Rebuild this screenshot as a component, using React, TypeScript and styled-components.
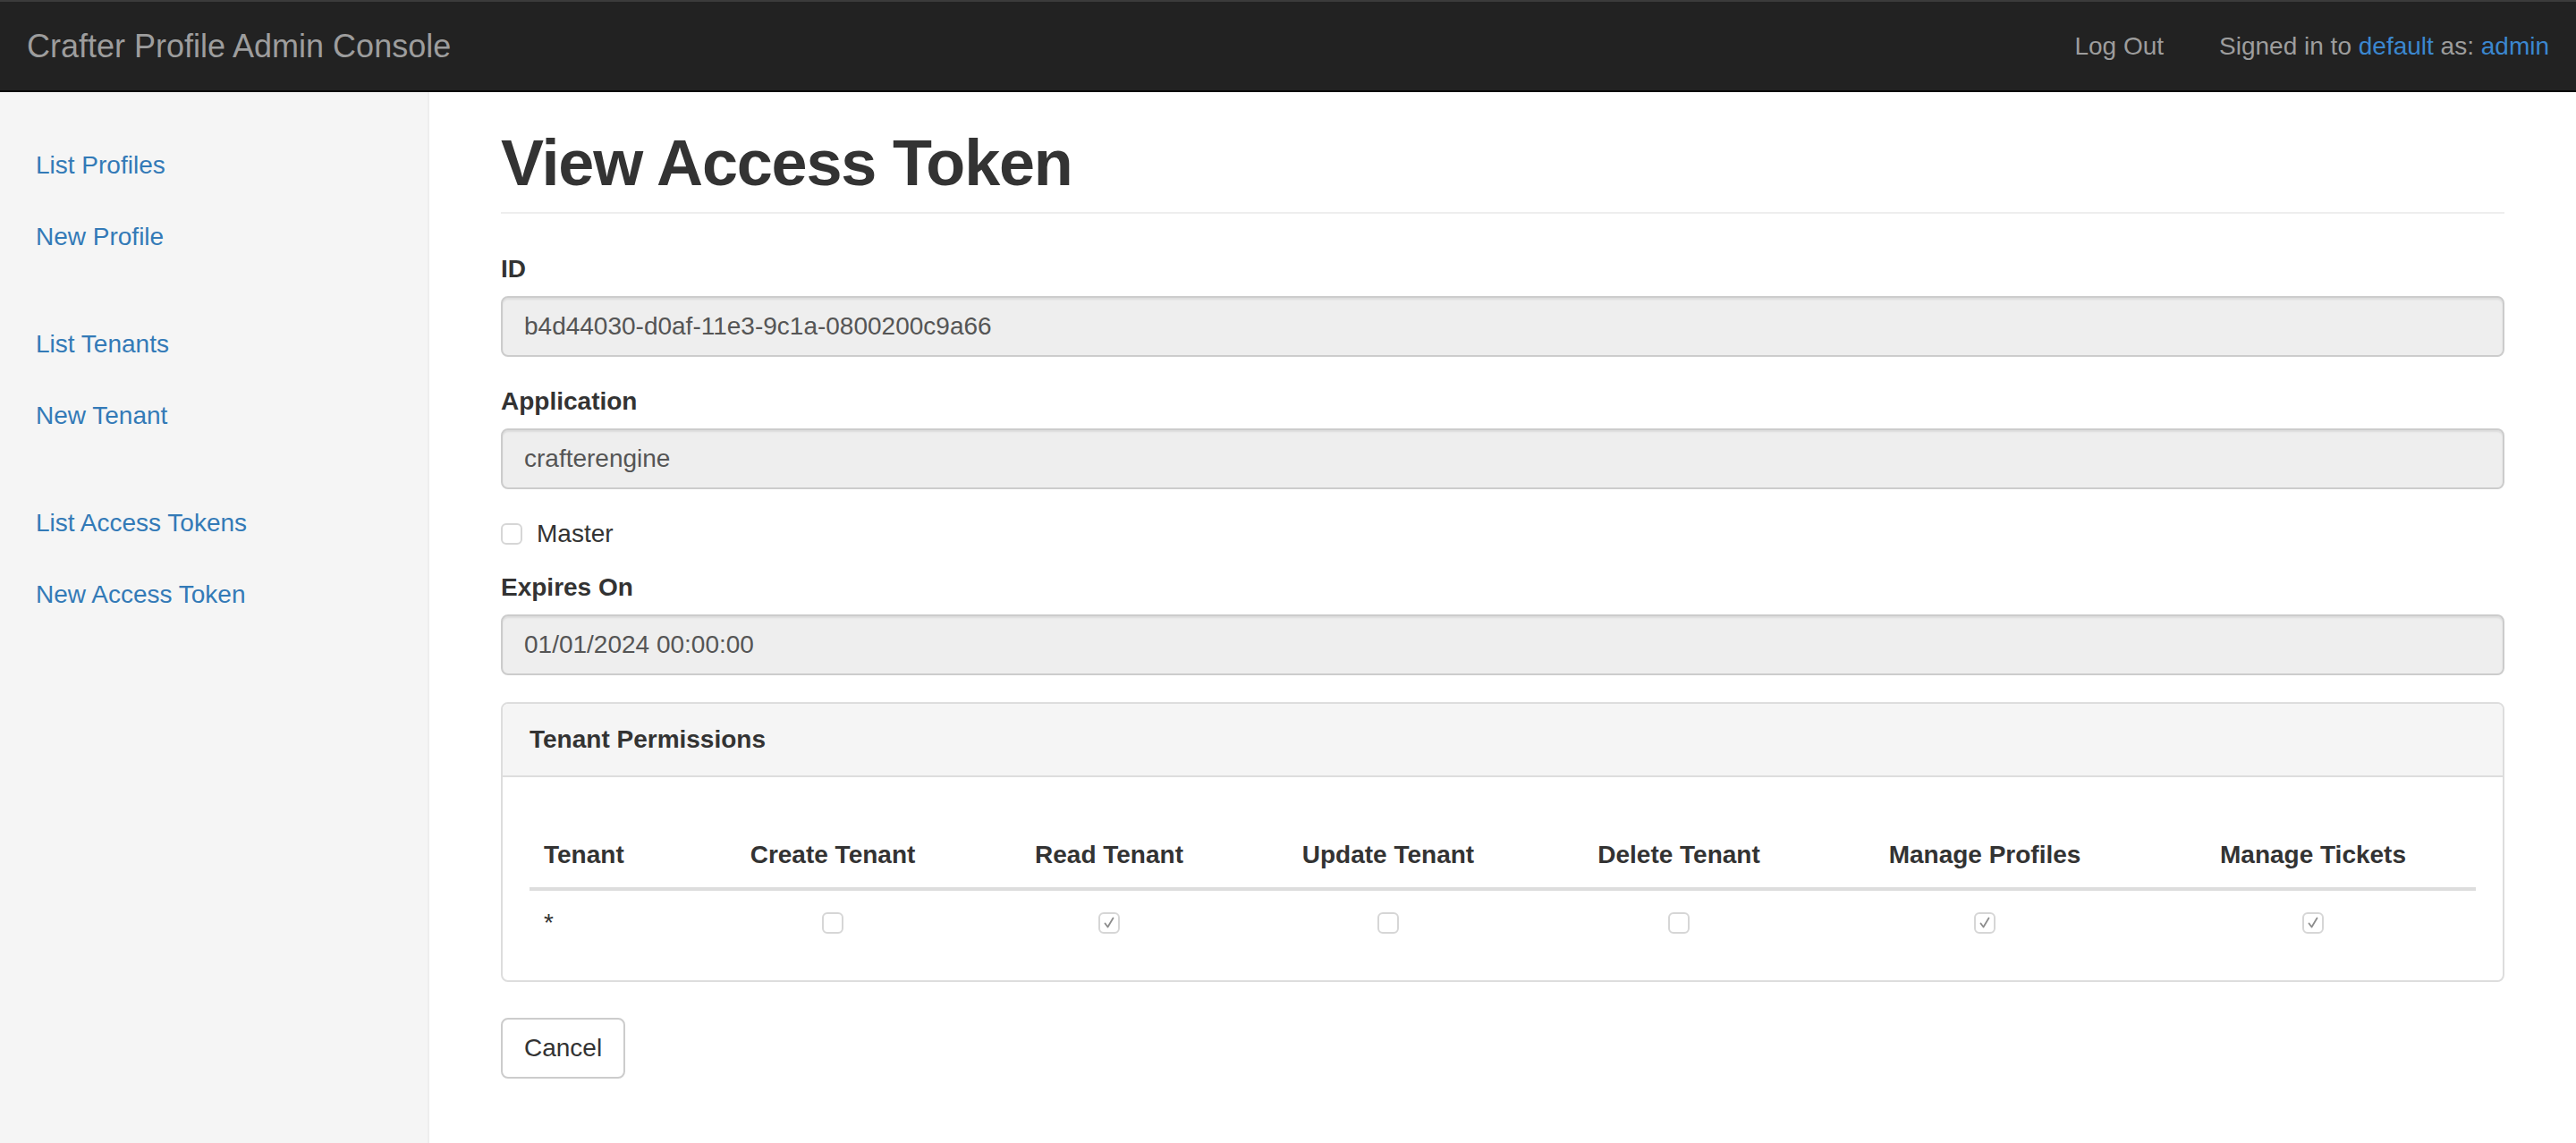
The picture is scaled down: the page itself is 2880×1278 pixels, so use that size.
import React from "react";
import styled, { createGlobalStyle } from "styled-components";

const GlobalStyle = createGlobalStyle`
  html, body { margin: 0; padding: 0; background: #fff; }
  body {
    font-family: "Liberation Sans", Helvetica, Arial, sans-serif;
    font-size: 28px;
    line-height: 40px;
    color: #333;
  }
  * { box-sizing: border-box; }
`;

const Navbar = styled.header`
  display: flex;
  align-items: center;
  height: 103px;
  padding: 0 30px;
  background: #222;
  border-top: 2px solid #3b3b3b;
  border-bottom: 2px solid #080808;
`;

const Brand = styled.span`
  font-size: 36px;
  line-height: 40px;
  color: #9d9d9d;
`;

const NavRight = styled.div`
  margin-left: auto;
  display: flex;
  align-items: center;
  gap: 62px;
  color: #9d9d9d;
`;

const NavLink = styled.a`
  color: #9d9d9d;
  text-decoration: none;
`;

const UserLink = styled.a`
  color: #3b87cf;
  text-decoration: none;
`;

const Layout = styled.div`
  display: flex;
  min-height: calc(100vh - 103px);
`;

const Sidebar = styled.nav`
  flex: none;
  width: 480px;
  padding: 42px 0 40px;
  background: #f5f5f5;
  border-right: 2px solid #eee;
`;

const NavGroup = styled.ul`
  list-style: none;
  margin: 0 0 40px;
  padding: 0;
`;

const SideLink = styled.a`
  display: block;
  padding: 20px 40px;
  color: #337ab7;
  text-decoration: none;
`;

const Main = styled.main`
  flex: 1;
  min-width: 0;
  padding: 40px 80px;
`;

const PageHeader = styled.h1`
  margin: 0 0 42px;
  padding-bottom: 15px;
  border-bottom: 2px solid #eee;
  font-size: 72px;
  line-height: 79px;
  font-weight: 700;
  letter-spacing: -1.2px;
  color: #333;
`;

const FormGroup = styled.div`
  margin-bottom: 30px;
`;

const Label = styled.label`
  display: inline-block;
  margin-bottom: 10px;
  font-weight: 700;
`;

const Input = styled.input`
  display: block;
  width: 100%;
  height: 68px;
  padding: 12px 24px;
  border: 2px solid #ccc;
  border-radius: 8px;
  background: #eee;
  box-shadow: inset 0 2px 2px rgba(0, 0, 0, 0.075);
  font: inherit;
  line-height: 40px;
  color: #555;
  outline: none;
`;

const CheckRow = styled.label`
  display: flex;
  align-items: center;
  gap: 16px;
  height: 40px;
  margin-bottom: 20px;
`;

const Box = styled.span`
  display: inline-flex;
  align-items: center;
  justify-content: center;
  width: 24px;
  height: 24px;
  flex: none;
  border: 2px solid #d6d6d6;
  border-radius: 6px;
  background: #fff;
`;

const Panel = styled.section`
  margin-bottom: 40px;
  border: 2px solid #ddd;
  border-radius: 8px;
  overflow: hidden;
`;

const PanelHeading = styled.div`
  padding: 20px 30px;
  background: #f5f5f5;
  border-bottom: 2px solid #ddd;
  font-weight: 700;
`;

const PanelBody = styled.div`
  padding: 51px 30px 28px;
`;

const Table = styled.table`
  width: 100%;
  border-collapse: collapse;
  table-layout: fixed;
`;

const Col = styled.col<{ $w: number }>`
  width: ${(p) => p.$w}px;
`;

const Th = styled.th<{ $left?: boolean }>`
  padding: 16px;
  text-align: ${(p) => (p.$left ? "left" : "center")};
  vertical-align: bottom;
  font-weight: 700;
  border-bottom: 4px solid #ddd;
  white-space: nowrap;
`;

const Td = styled.td<{ $left?: boolean }>`
  padding: 16px;
  text-align: ${(p) => (p.$left ? "left" : "center")};
  vertical-align: top;
`;

const CellCenter = styled.div`
  display: flex;
  align-items: center;
  justify-content: center;
  height: 40px;
`;

const Button = styled.button`
  padding: 12px 24px;
  border: 2px solid #ccc;
  border-radius: 8px;
  background: #fff;
  font: inherit;
  line-height: 40px;
  color: #333;
  cursor: pointer;
`;

function CheckBox({ checked }: { checked?: boolean }) {
  return (
    <Box>
      {checked && (
        <svg width="16" height="16" viewBox="0 0 16 16" aria-hidden="true">
          <path
            d="M3.5 8.5 L6.5 12.5 L12.5 2.5"
            fill="none"
            stroke="#8c8c8c"
            strokeWidth="1.8"
            strokeLinecap="round"
            strokeLinejoin="round"
          />
        </svg>
      )}
    </Box>
  );
}

const navGroups = [
  ["List Profiles", "New Profile"],
  ["List Tenants", "New Tenant"],
  ["List Access Tokens", "New Access Token"],
];

const columns = [
  { title: "Tenant", w: 174 },
  { title: "Create Tenant", w: 330 },
  { title: "Read Tenant", w: 288 },
  { title: "Update Tenant", w: 336 },
  { title: "Delete Tenant", w: 314 },
  { title: "Manage Profiles", w: 370 },
  { title: "Manage Tickets", w: 364 },
];

const permissions = [false, true, false, false, true, true];

export default function App() {
  return (
    <>
      <GlobalStyle />
      <Navbar>
        <Brand>Crafter Profile Admin Console</Brand>
        <NavRight>
          <NavLink href="#">Log Out</NavLink>
          <span>
            Signed in to <UserLink href="#">default</UserLink> as:{" "}
            <UserLink href="#">admin</UserLink>
          </span>
        </NavRight>
      </Navbar>
      <Layout>
        <Sidebar>
          {navGroups.map((group, i) => (
            <NavGroup key={i}>
              {group.map((item) => (
                <li key={item}>
                  <SideLink href="#">{item}</SideLink>
                </li>
              ))}
            </NavGroup>
          ))}
        </Sidebar>
        <Main>
          <PageHeader>View Access Token</PageHeader>
          <FormGroup>
            <Label>ID</Label>
            <Input readOnly value="b4d44030-d0af-11e3-9c1a-0800200c9a66" />
          </FormGroup>
          <FormGroup>
            <Label>Application</Label>
            <Input readOnly value="crafterengine" />
          </FormGroup>
          <CheckRow>
            <CheckBox />
            <span>Master</span>
          </CheckRow>
          <FormGroup>
            <Label>Expires On</Label>
            <Input readOnly value="01/01/2024 00:00:00" />
          </FormGroup>
          <Panel>
            <PanelHeading>Tenant Permissions</PanelHeading>
            <PanelBody>
              <Table>
                <colgroup>
                  {columns.map((c) => (
                    <Col key={c.title} $w={c.w} />
                  ))}
                </colgroup>
                <thead>
                  <tr>
                    {columns.map((c, i) => (
                      <Th key={c.title} $left={i === 0}>
                        {c.title}
                      </Th>
                    ))}
                  </tr>
                </thead>
                <tbody>
                  <tr>
                    <Td $left>*</Td>
                    {permissions.map((p, i) => (
                      <Td key={i}>
                        <CellCenter>
                          <CheckBox checked={p} />
                        </CellCenter>
                      </Td>
                    ))}
                  </tr>
                </tbody>
              </Table>
            </PanelBody>
          </Panel>
          <Button type="button">Cancel</Button>
        </Main>
      </Layout>
    </>
  );
}
